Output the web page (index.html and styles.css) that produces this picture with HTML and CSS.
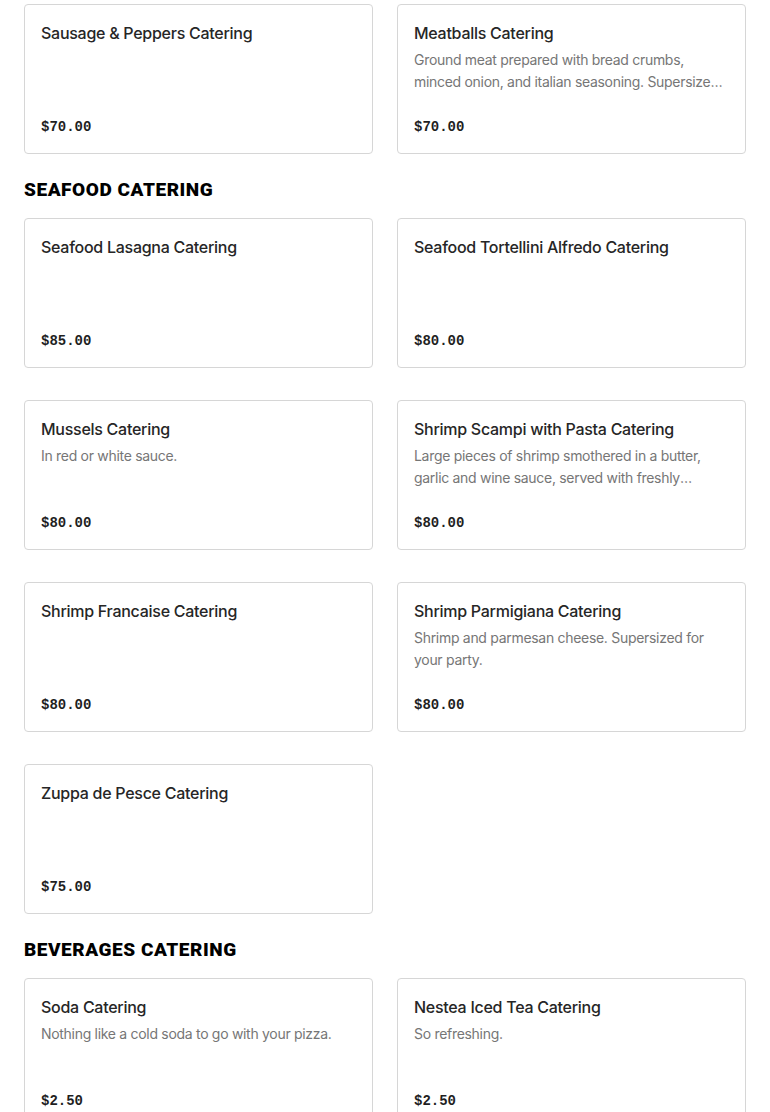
FILE: index.html
```html
<!DOCTYPE html>
<html lang="en">
<head>
<meta charset="utf-8">
<title>Catering Menu</title>
<link rel="stylesheet" href="styles.css">
</head>
<body>
<main class="menu">
  <section class="category category-first">
    <div class="grid">
      <article class="card">
        <h3 class="card-title">Sausage &amp; Peppers Catering</h3>
        <div class="card-price">$70.00</div>
      </article>
      <article class="card">
        <h3 class="card-title">Meatballs Catering</h3>
        <p class="card-desc">Ground meat prepared with bread crumbs, minced onion, and italian seasoning. Supersized for your party.</p>
        <div class="card-price">$70.00</div>
      </article>
    </div>
  </section>

  <section class="category">
    <h2 class="category-title">SEAFOOD CATERING</h2>
    <div class="grid">
      <article class="card">
        <h3 class="card-title">Seafood Lasagna Catering</h3>
        <div class="card-price">$85.00</div>
      </article>
      <article class="card">
        <h3 class="card-title">Seafood Tortellini Alfredo Catering</h3>
        <div class="card-price">$80.00</div>
      </article>
      <article class="card">
        <h3 class="card-title">Mussels Catering</h3>
        <p class="card-desc">In red or white sauce.</p>
        <div class="card-price">$80.00</div>
      </article>
      <article class="card">
        <h3 class="card-title">Shrimp Scampi with Pasta Catering</h3>
        <p class="card-desc">Large pieces of shrimp smothered in a butter, garlic and wine sauce, served with freshly prepared pasta. Supersized for your party.</p>
        <div class="card-price">$80.00</div>
      </article>
      <article class="card">
        <h3 class="card-title">Shrimp Francaise Catering</h3>
        <div class="card-price">$80.00</div>
      </article>
      <article class="card">
        <h3 class="card-title">Shrimp Parmigiana Catering</h3>
        <p class="card-desc">Shrimp and parmesan cheese. Supersized for your party.</p>
        <div class="card-price">$80.00</div>
      </article>
      <article class="card">
        <h3 class="card-title">Zuppa de Pesce Catering</h3>
        <div class="card-price">$75.00</div>
      </article>
    </div>
  </section>

  <section class="category">
    <h2 class="category-title">BEVERAGES CATERING</h2>
    <div class="grid">
      <article class="card">
        <h3 class="card-title">Soda Catering</h3>
        <p class="card-desc">Nothing like a cold soda to go with your pizza.</p>
        <div class="card-price">$2.50</div>
      </article>
      <article class="card">
        <h3 class="card-title">Nestea Iced Tea Catering</h3>
        <p class="card-desc">So refreshing.</p>
        <div class="card-price">$2.50</div>
      </article>
    </div>
  </section>
</main>
</body>
</html>
```

FILE: styles.css
```css
* {
  box-sizing: border-box;
}

html, body {
  margin: 0;
  padding: 0;
  background: #ffffff;
}

body {
  font-family: "Inter", "Liberation Sans", Arial, sans-serif;
  color: #222222;
}

.menu {
  padding: 4px 24px 0;
}

.category {
  margin-top: 24px;
}

.category-first {
  margin-top: 0;
}

.category-title {
  margin: 0 0 16px;
  font-family: "Roboto", "Liberation Sans", Arial, sans-serif;
  font-weight: 900;
  font-size: 19px;
  line-height: 24px;
  letter-spacing: 0.55px;
  color: #000000;
}

.grid {
  display: grid;
  grid-template-columns: 1fr 1fr;
  column-gap: 24px;
  row-gap: 32px;
}

.card {
  display: flex;
  flex-direction: column;
  height: 150px;
  padding: 16px;
  border: 1px solid #d6d6d6;
  border-radius: 4px;
  background: #ffffff;
}

.card-title {
  margin: 0;
  font-size: 16px;
  line-height: 24px;
  font-weight: 500;
  letter-spacing: -0.27px;
  color: #262626;
}

.card-desc {
  margin: 4px 0 0;
  font-size: 14px;
  line-height: 22px;
  letter-spacing: -0.3px;
  color: #767676;
  display: -webkit-box;
  -webkit-line-clamp: 2;
  -webkit-box-orient: vertical;
  overflow: hidden;
}

.card-price {
  margin-top: auto;
  font-family: "Liberation Mono", "DejaVu Sans Mono", monospace;
  font-weight: 700;
  font-size: 14px;
  line-height: 20px;
  color: #1f1f1f;
}
```
